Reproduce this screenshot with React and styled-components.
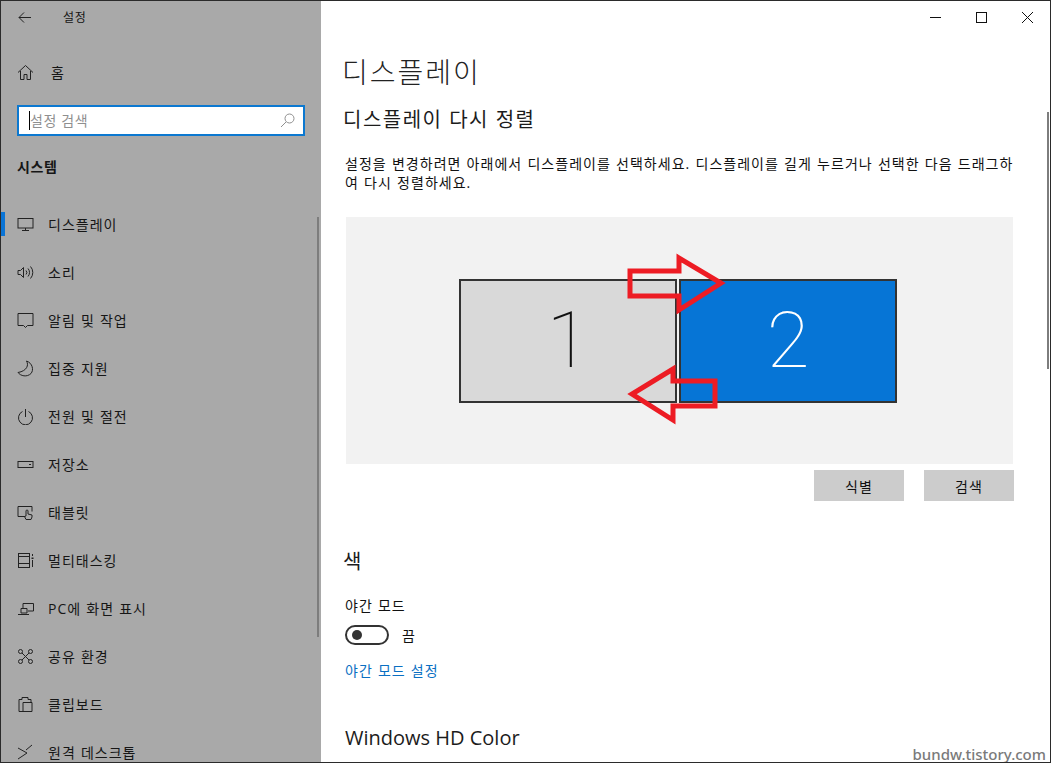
import React from 'react';
import styled, { createGlobalStyle } from 'styled-components';

const FONT = `"Open Sans", "Noto Sans CJK KR", sans-serif`;

const GlobalStyle = createGlobalStyle`
  html, body {
    margin: 0;
    padding: 0;
    background: #fff;
    overflow: hidden;
  }
  * {
    box-sizing: border-box;
  }
`;

const Window = styled.div`
  position: relative;
  display: flex;
  width: 1051px;
  height: 763px;
  overflow: hidden;
  border: 1px solid #2b2b2b;
  font-family: ${FONT};
  color: #111;
`;

const Sidebar = styled.aside`
  position: relative;
  flex: 0 0 320px;
  height: 100%;
  overflow: hidden;
  background: #a9a9a9;
  color: #161616;
`;

const SideBar = styled.div`
  display: flex;
  align-items: center;
  height: 32px;
  padding-left: 16px;
`;

const BackTitle = styled.span`
  margin-left: 29px;
  font-size: 12px;
  letter-spacing: 0.6px;
`;

const HomeRow = styled.div`
  display: flex;
  align-items: center;
  height: 40px;
  margin-top: 19px;
  padding-left: 16px;
  font-size: 14px;
`;

const HomeLabel = styled.span`
  margin-left: 17px;
`;

const SearchBox = styled.div`
  display: flex;
  align-items: center;
  width: 288px;
  height: 31px;
  margin: 13px 0 0 16px;
  padding: 0 8px 0 10px;
  background: #fff;
  border: 2px solid #0b78d0;
  font-size: 14px;
  letter-spacing: 0.6px;
  color: #8f8f8f;
`;

const Caret = styled.span`
  width: 1px;
  height: 19px;
  background: #000;
`;

const SearchText = styled.span`
  flex: 1;
  padding-bottom: 2px;
`;

const SectionLabel = styled.div`
  margin: 19px 0 0 16px;
  font-size: 14px;
  font-weight: 700;
  line-height: 24px;
  letter-spacing: 0.6px;
`;

const Nav = styled.nav`
  margin-top: 21px;
`;

const NavRow = styled.div`
  position: relative;
  display: flex;
  align-items: center;
  height: 48px;
  padding-left: 16px;
  font-size: 14px;
  letter-spacing: 1px;
  word-spacing: 0.5px;
  &::before {
    content: '';
    display: ${(p) => (p.$active ? 'block' : 'none')};
    position: absolute;
    left: 0;
    top: 12px;
    width: 4px;
    height: 24px;
    background: #0a74d6;
  }
`;

const NavIcon = styled.svg`
  flex: 0 0 17px;
  width: 17px;
  height: 17px;
  fill: none;
  stroke: #222;
  stroke-width: 1;
`;

const NavLabel = styled.span`
  margin-left: 14px;
`;

const SideScroll = styled.div`
  position: absolute;
  right: 2px;
  top: 216px;
  width: 2px;
  height: 420px;
  background: #7d7d7d;
`;

const Main = styled.main`
  position: relative;
  flex: 1;
  height: 100%;
  overflow: hidden;
  padding-left: 23px;
  background: #fff;
`;

const Controls = styled.div`
  display: flex;
  justify-content: flex-end;
  height: 32px;
  margin-left: -23px;
`;

const ControlButton = styled.div`
  display: flex;
  align-items: center;
  justify-content: center;
  width: 46px;
  height: 32px;
`;

const ControlIcon = styled.svg`
  width: 11px;
  height: 11px;
  fill: none;
  stroke: #111;
  stroke-width: 1;
`;

const SearchIcon = styled.svg`
  width: 15px;
  height: 15px;
  fill: none;
  stroke: #8f8f8f;
  stroke-width: 1;
`;

const PageTitle = styled.h1`
  margin: 19px 0 0 -2px;
  font-size: 28px;
  font-weight: 300;
  line-height: 40px;
  letter-spacing: 2px;
  color: #222;
`;

const SubTitle = styled.h2`
  margin: ${(p) => p.$top}px 0 0 -1px;
  font-size: 20px;
  font-weight: 400;
  line-height: 28px;
  letter-spacing: 1.5px;
  color: #1c1c1c;
`;

const LatinTitle = styled(SubTitle)`
  margin-left: 1px;
  letter-spacing: 0;
`;

const Description = styled.p`
  width: 670px;
  margin: 20px 0 0 1px;
  font-size: 14px;
  line-height: 19px;
  letter-spacing: 1.03px;
  word-spacing: 0.5px;
`;

const Stage = styled.div`
  position: relative;
  display: flex;
  align-items: center;
  justify-content: center;
  gap: 2px;
  width: 667px;
  height: 247px;
  margin: 25px 0 0 2px;
  padding-right: 3px;
  background: #f2f2f2;
`;

const Monitor = styled.div`
  display: flex;
  align-items: center;
  justify-content: center;
  width: 218px;
  height: 124px;
  border: 2px solid #333;
  background: ${(p) => (p.$on ? '#0675d6' : '#d9d9d9')};
  color: ${(p) => (p.$on ? '#fff' : '#111')};
  font-family: Roboto, sans-serif;
  font-size: 78px;
  font-weight: 100;
`;

const ArrowLayer = styled.svg`
  position: absolute;
  inset: 0;
  width: 100%;
  height: 100%;
  fill: none;
  stroke: #ed1c24;
  stroke-width: 5;
`;

const StageActions = styled.div`
  display: flex;
  justify-content: flex-end;
  gap: 20px;
  width: 668px;
  margin: 6px 0 0 2px;
`;

const ActionButton = styled.div`
  display: flex;
  align-items: center;
  justify-content: center;
  width: 90px;
  height: 31px;
  background: #cccccc;
  font-size: 14px;
  letter-spacing: 1px;
`;

const FieldLabel = styled.div`
  margin: 20px 0 0 1px;
  font-size: 14px;
  line-height: 20px;
  letter-spacing: 1px;
  word-spacing: 0.5px;
`;

const ToggleRow = styled.div`
  display: flex;
  align-items: center;
  height: 20px;
  margin: 9px 0 0 1px;
  font-size: 14px;
`;

const Toggle = styled.div`
  display: flex;
  align-items: center;
  width: 44px;
  height: 20px;
  padding-left: 5px;
  border: 2px solid #333;
  border-radius: 10px;
`;

const ToggleKnob = styled.div`
  width: 10px;
  height: 10px;
  border-radius: 50%;
  background: #333;
`;

const ToggleText = styled.span`
  margin-left: 13px;
`;

const SettingLink = styled.div`
  margin: 16px 0 0 1px;
  font-size: 14px;
  line-height: 20px;
  letter-spacing: 1px;
  word-spacing: 0.5px;
  color: #0a6fc2;
`;

const MainScroll = styled.div`
  position: absolute;
  right: 1px;
  top: 111px;
  width: 2px;
  height: 257px;
  background: #7d7d7d;
`;

const Watermark = styled.div`
  position: absolute;
  right: 4px;
  bottom: -2px;
  font-family: "Noto Sans", sans-serif;
  font-size: 15px;
  font-weight: 500;
  color: #7a7a7a;
`;

const NAV_ITEMS = [
  {
    label: '디스플레이',
    active: true,
    icon: <><rect x="1" y="2.5" width="15" height="9.5" /><path d="M8.5 12v2.5M5 14.5h7" /></>,
  },
  {
    label: '소리',
    icon: <><path d="M1 6.5v4h2.5l3 3v-10l-3 3z" /><path d="M9 6.5a3 3 0 0 1 0 4M11 4.5a6 6 0 0 1 0 8M13.5 2.5a9 9 0 0 1 0 12" /></>,
  },
  {
    label: '알림 및 작업',
    icon: <path d="M1 1.5h15v12h-5.5L8.5 15.5l-2-2H1z" />,
  },
  {
    label: '집중 지원',
    icon: <path d="M9.5 1c2.500 4 .5 10-8.500 11.500C3.500 16 10 17.500 14 13.500 17 10 15.500 3 9.500 1z" />,
  },
  {
    label: '전원 및 절전',
    icon: <><path d="M5.5 3.500a7 7 0 1 0 6 0" /><path d="M8.5 1v8" /></>,
  },
  {
    label: '저장소',
    icon: <><rect x="1" y="5.500" width="15" height="6" /><path d="M12 8.500h2" /></>,
  },
  {
    label: '태블릿',
    icon: <><path d="M8 12.500H1v-10h14v5" /><path d="M9 15.500l-1.500-3 1.500-.5V7a1 1 0 0 1 2 0v3l4 1v2l-1 2.500z" /></>,
  },
  {
    label: '멀티태스킹',
    icon: <><path d="M1.500 1v15M12.500 1v15M1 4.500h12M1 11.500h12" /><path d="M1 1.500h12M1 15.500h12" /><path d="M15.500 2v2M15.500 8v7" /><path d="M15.500 5.500v1.500" strokeWidth="2" /></>,
  },
  {
    label: 'PC에 화면 표시',
    icon: <><path d="M6 9V3.500h10.500V11H11" /><path d="M4 8.500h6V13H4zM1 14.500h11" /></>,
  },
  {
    label: '공유 환경',
    icon: <><circle cx="3.500" cy="3.500" r="2" /><circle cx="13.500" cy="3.500" r="2" /><circle cx="3.500" cy="13.500" r="2" /><circle cx="13.500" cy="13.500" r="2" /><path d="M5 5l7 7M12 5l-7 7" /></>,
  },
  {
    label: '클립보드',
    icon: <><path d="M5 3.500H2v12h4M6 6.500h9v9H6zM5 3.500V1.500h6v2M11 3.500h3v3" /></>,
  },
  {
    label: '원격 데스크톱',
    icon: <path d="M1 15l9-6-9-5M15 1l-6 5" />,
  },
];

function NavList() {
  return (
    <Nav>
      {NAV_ITEMS.map((item) => (
        <NavRow key={item.label} $active={item.active}>
          <NavIcon viewBox="0 0 17 17">{item.icon}</NavIcon>
          <NavLabel>{item.label}</NavLabel>
        </NavRow>
      ))}
    </Nav>
  );
}

export default function App() {
  return (
    <>
      <GlobalStyle />
      <Window>
        <Sidebar>
          <SideBar>
            <NavIcon viewBox="0 0 17 17">
              <path d="M14 8.500H2M7 3.500l-5 5 5 5" />
            </NavIcon>
            <BackTitle>설정</BackTitle>
          </SideBar>
          <HomeRow>
            <NavIcon viewBox="0 0 17 17">
              <path d="M1 8.500L8.500 1.500l7.500 7M3.500 7v8.500h3.500V10.500h3v5h3.500V7" />
            </NavIcon>
            <HomeLabel>홈</HomeLabel>
          </HomeRow>
          <SearchBox>
            <Caret />
            <SearchText>설정 검색</SearchText>
            <SearchIcon viewBox="0 0 15 15">
              <circle cx="9.500" cy="5.500" r="4.500" />
              <path d="M6 9l-5 5" />
            </SearchIcon>
          </SearchBox>
          <SectionLabel>시스템</SectionLabel>
          <NavList />
          <SideScroll />
        </Sidebar>
        <Main>
          <Controls>
            <ControlButton>
              <ControlIcon viewBox="0 0 11 11"><path d="M0 5.500h11" /></ControlIcon>
            </ControlButton>
            <ControlButton>
              <ControlIcon viewBox="0 0 11 11"><rect x=".5" y=".5" width="10" height="10" /></ControlIcon>
            </ControlButton>
            <ControlButton>
              <ControlIcon viewBox="0 0 11 11"><path d="M0 0l11 11M11 0L0 11" /></ControlIcon>
            </ControlButton>
          </Controls>
          <PageTitle>디스플레이</PageTitle>
          <SubTitle $top={14}>디스플레이 다시 정렬</SubTitle>
          <Description>
            설정을 변경하려면 아래에서 디스플레이를 선택하세요. 디스플레이를 길게 누르거나 선택한 다음 드래그하여 다시 정렬하세요.
          </Description>
          <Stage>
            <Monitor>1</Monitor>
            <Monitor $on>2</Monitor>
            <ArrowLayer viewBox="346 217 667 247">
              <path d="M630 271h49v-13l42 25-42 27v-14h-49z" />
              <path d="M715 381h-42v-12l-41 25 41 26v-14h42z" />
            </ArrowLayer>
          </Stage>
          <StageActions>
            <ActionButton>식별</ActionButton>
            <ActionButton>검색</ActionButton>
          </StageActions>
          <SubTitle $top={47}>색</SubTitle>
          <FieldLabel>야간 모드</FieldLabel>
          <ToggleRow>
            <Toggle><ToggleKnob /></Toggle>
            <ToggleText>끔</ToggleText>
          </ToggleRow>
          <SettingLink>야간 모드 설정</SettingLink>
          <LatinTitle $top={43}>Windows HD Color</LatinTitle>
          <MainScroll />
        </Main>
        <Watermark>bundw.tistory.com</Watermark>
      </Window>
    </>
  );
}
